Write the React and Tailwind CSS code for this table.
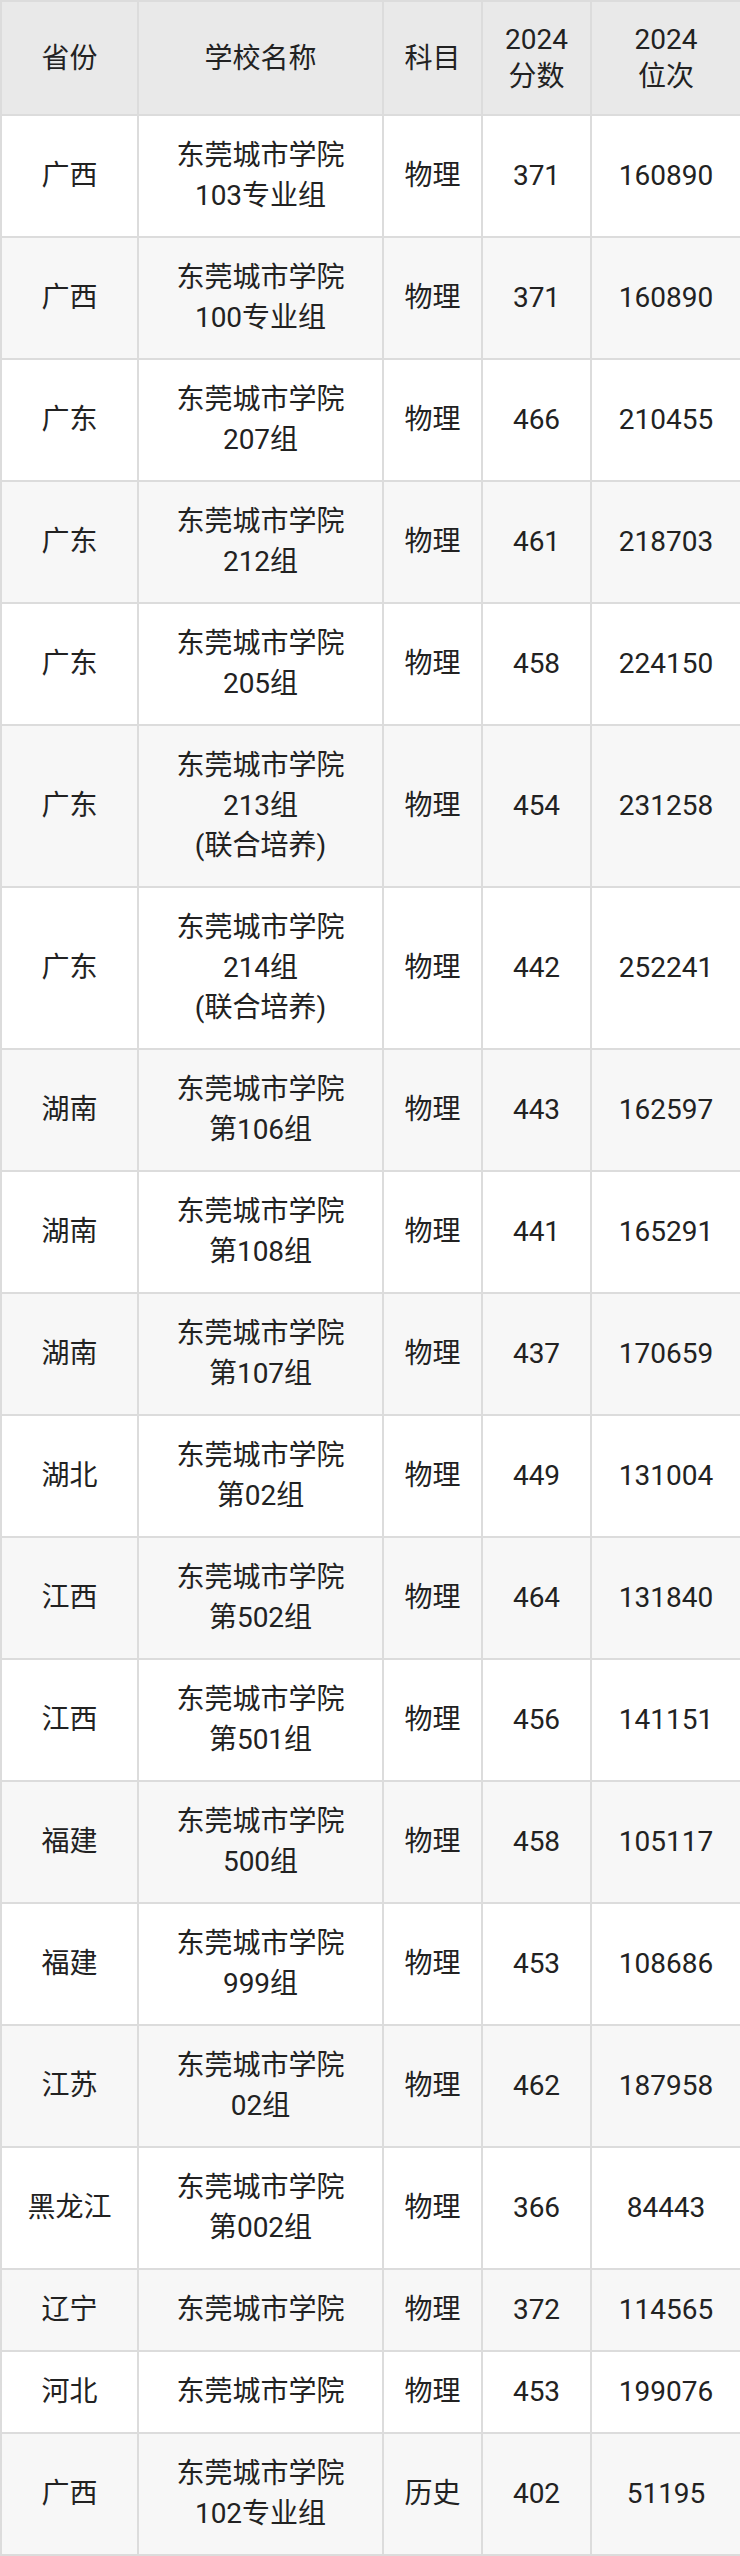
import React from "react";

const rows = [
  ["广西", ["东莞城市学院", "103专业组"], "物理", "371", "160890"],
  ["广西", ["东莞城市学院", "100专业组"], "物理", "371", "160890"],
  ["广东", ["东莞城市学院", "207组"], "物理", "466", "210455"],
  ["广东", ["东莞城市学院", "212组"], "物理", "461", "218703"],
  ["广东", ["东莞城市学院", "205组"], "物理", "458", "224150"],
  ["广东", ["东莞城市学院", "213组", "(联合培养)"], "物理", "454", "231258"],
  ["广东", ["东莞城市学院", "214组", "(联合培养)"], "物理", "442", "252241"],
  ["湖南", ["东莞城市学院", "第106组"], "物理", "443", "162597"],
  ["湖南", ["东莞城市学院", "第108组"], "物理", "441", "165291"],
  ["湖南", ["东莞城市学院", "第107组"], "物理", "437", "170659"],
  ["湖北", ["东莞城市学院", "第02组"], "物理", "449", "131004"],
  ["江西", ["东莞城市学院", "第502组"], "物理", "464", "131840"],
  ["江西", ["东莞城市学院", "第501组"], "物理", "456", "141151"],
  ["福建", ["东莞城市学院", "500组"], "物理", "458", "105117"],
  ["福建", ["东莞城市学院", "999组"], "物理", "453", "108686"],
  ["江苏", ["东莞城市学院", "02组"], "物理", "462", "187958"],
  ["黑龙江", ["东莞城市学院", "第002组"], "物理", "366", "84443"],
  ["辽宁", ["东莞城市学院"], "物理", "372", "114565"],
  ["河北", ["东莞城市学院"], "物理", "453", "199076"],
  ["广西", ["东莞城市学院", "102专业组"], "历史", "402", "51195"],
];

const th = "border-2 border-[#dcdcdc] px-1 py-[19px] font-normal leading-[37px] text-center align-middle";
const td = "border-2 border-[#dcdcdc] px-1 py-[20px] leading-[40px] text-center align-middle";

export default function App() {
  return (
    <div className="w-[740px] bg-white text-[#222] text-[28px]" style={{ fontFamily: 'Roboto, "Noto Sans CJK SC", sans-serif' }}>
      <table className="w-[740px] table-fixed border-collapse">
        <colgroup>
          <col className="w-[137px]" />
          <col className="w-[245px]" />
          <col className="w-[99px]" />
          <col className="w-[109px]" />
          <col className="w-[150px]" />
        </colgroup>
        <thead>
          <tr className="bg-[#e9e9e9]">
            <th className={th}>省份</th>
            <th className={th}>学校名称</th>
            <th className={th}>科目</th>
            <th className={th}>2024<br />分数</th>
            <th className={th}>2024<br />位次</th>
          </tr>
        </thead>
        <tbody>
          {rows.map((r, i) => (
            <tr key={i} className={i % 2 === 1 ? "bg-[#f7f7f7]" : "bg-white"}>
              <td className={td}>{r[0]}</td>
              <td className={td}>
                {r[1].map((line, j) => (
                  <div key={j}>{line}</div>
                ))}
              </td>
              <td className={td}>{r[2]}</td>
              <td className={td}>{r[3]}</td>
              <td className={td}>{r[4]}</td>
            </tr>
          ))}
        </tbody>
      </table>
    </div>
  );
}
